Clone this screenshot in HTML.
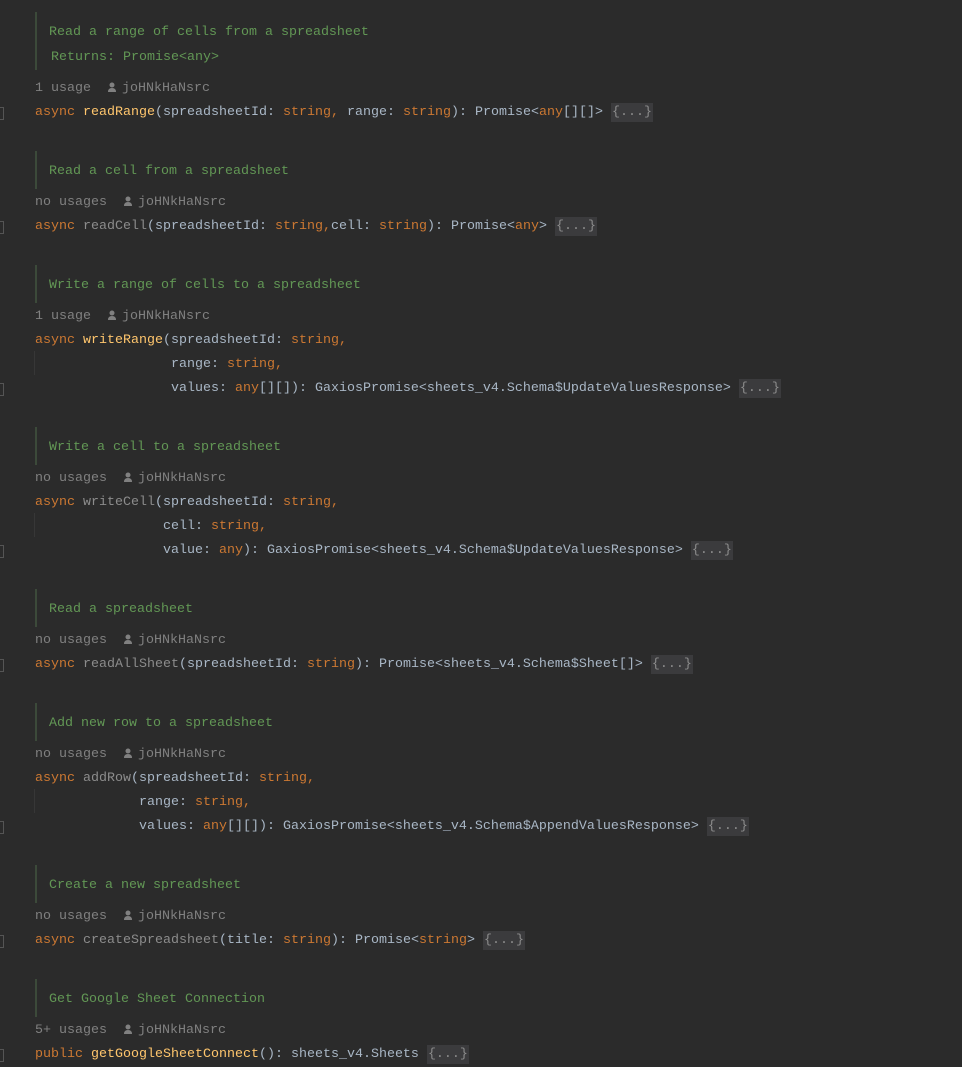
<!DOCTYPE html>
<html><head><meta charset="utf-8"><style>
html,body{margin:0;padding:0;background:#2b2b2b;width:962px;height:1067px;overflow:hidden}
.l{position:absolute;left:35px;height:20px;line-height:20px;margin-top:2px;font-family:"Liberation Mono",monospace;font-size:13.33px;white-space:pre;color:#a9b7c6}
.d{color:#629755;left:49px}
.u{color:#808080}
.k{color:#cc7832}
.f{color:#ffc66d}
.g{color:#8c8c8c}
.fold{background:#3b3b3d;color:#8c8c8c;padding:2px 1px}
.bar{position:absolute;left:35px;width:2px;background:#3c4a3a}
.ig{position:absolute;left:34px;width:1px;background:#373737}
.gm{position:absolute;left:0;width:3px;height:11px;border:1px solid #555;border-left:none;margin-top:2px}
.ic{display:inline-block;width:10px;height:10px;vertical-align:-1px;margin-right:5px}
</style></head><body>
<svg width="0" height="0" style="position:absolute"><defs><g id="p"><circle cx="5" cy="3" r="2.5" fill="#808080"/><path d="M1 10 Q1 6 5 6 Q9 6 9 10Z" fill="#808080"/></g></defs></svg>

<div class="bar" style="top:12px;height:58px"></div>
<div class="l d" style="top:21px">Read a range of cells from a spreadsheet</div>
<div class="l d" style="top:46px;left:51px">Returns: Promise&lt;any&gt;</div>
<div class="l u" style="top:77px">1 usage  <svg class="ic"><use href="#p"/></svg>joHNkHaNsrc</div>
<div class="gm" style="top:105px"></div>
<div class="l" style="top:101px"><span class="k">async </span><span class="f">readRange</span>(spreadsheetId: <span class="k">string, </span>range: <span class="k">string</span>): Promise&lt;<span class="k">any</span>[][]&gt; <span class="fold">{...}</span></div>

<div class="bar" style="top:151px;height:38px"></div>
<div class="l d" style="top:160px">Read a cell from a spreadsheet</div>
<div class="l u" style="top:191px">no usages  <svg class="ic"><use href="#p"/></svg>joHNkHaNsrc</div>
<div class="gm" style="top:219px"></div>
<div class="l" style="top:215px"><span class="k">async </span><span class="g">readCell</span>(spreadsheetId: <span class="k">string,</span>cell: <span class="k">string</span>): Promise&lt;<span class="k">any</span>&gt; <span class="fold">{...}</span></div>

<div class="bar" style="top:265px;height:38px"></div>
<div class="l d" style="top:274px">Write a range of cells to a spreadsheet</div>
<div class="l u" style="top:305px">1 usage  <svg class="ic"><use href="#p"/></svg>joHNkHaNsrc</div>
<div class="ig" style="top:351px;height:24px"></div>
<div class="gm" style="top:381px"></div>
<div class="l" style="top:329px"><span class="k">async </span><span class="f">writeRange</span>(spreadsheetId: <span class="k">string,</span></div>
<div class="l" style="top:353px">                 range: <span class="k">string,</span></div>
<div class="l" style="top:377px">                 values: <span class="k">any</span>[][]): GaxiosPromise&lt;sheets_v4.Schema$UpdateValuesResponse&gt; <span class="fold">{...}</span></div>

<div class="bar" style="top:427px;height:38px"></div>
<div class="l d" style="top:436px">Write a cell to a spreadsheet</div>
<div class="l u" style="top:467px">no usages  <svg class="ic"><use href="#p"/></svg>joHNkHaNsrc</div>
<div class="ig" style="top:513px;height:24px"></div>
<div class="gm" style="top:543px"></div>
<div class="l" style="top:491px"><span class="k">async </span><span class="g">writeCell</span>(spreadsheetId: <span class="k">string,</span></div>
<div class="l" style="top:515px">                cell: <span class="k">string,</span></div>
<div class="l" style="top:539px">                value: <span class="k">any</span>): GaxiosPromise&lt;sheets_v4.Schema$UpdateValuesResponse&gt; <span class="fold">{...}</span></div>

<div class="bar" style="top:589px;height:38px"></div>
<div class="l d" style="top:598px">Read a spreadsheet</div>
<div class="l u" style="top:629px">no usages  <svg class="ic"><use href="#p"/></svg>joHNkHaNsrc</div>
<div class="gm" style="top:657px"></div>
<div class="l" style="top:653px"><span class="k">async </span><span class="g">readAllSheet</span>(spreadsheetId: <span class="k">string</span>): Promise&lt;sheets_v4.Schema$Sheet[]&gt; <span class="fold">{...}</span></div>

<div class="bar" style="top:703px;height:38px"></div>
<div class="l d" style="top:712px">Add new row to a spreadsheet</div>
<div class="l u" style="top:743px">no usages  <svg class="ic"><use href="#p"/></svg>joHNkHaNsrc</div>
<div class="ig" style="top:789px;height:24px"></div>
<div class="gm" style="top:819px"></div>
<div class="l" style="top:767px"><span class="k">async </span><span class="g">addRow</span>(spreadsheetId: <span class="k">string,</span></div>
<div class="l" style="top:791px">             range: <span class="k">string,</span></div>
<div class="l" style="top:815px">             values: <span class="k">any</span>[][]): GaxiosPromise&lt;sheets_v4.Schema$AppendValuesResponse&gt; <span class="fold">{...}</span></div>

<div class="bar" style="top:865px;height:38px"></div>
<div class="l d" style="top:874px">Create a new spreadsheet</div>
<div class="l u" style="top:905px">no usages  <svg class="ic"><use href="#p"/></svg>joHNkHaNsrc</div>
<div class="gm" style="top:933px"></div>
<div class="l" style="top:929px"><span class="k">async </span><span class="g">createSpreadsheet</span>(title: <span class="k">string</span>): Promise&lt;<span class="k">string</span>&gt; <span class="fold">{...}</span></div>

<div class="bar" style="top:979px;height:38px"></div>
<div class="l d" style="top:988px">Get Google Sheet Connection</div>
<div class="l u" style="top:1019px">5+ usages  <svg class="ic"><use href="#p"/></svg>joHNkHaNsrc</div>
<div class="gm" style="top:1047px"></div>
<div class="l" style="top:1043px"><span class="k">public </span><span class="f">getGoogleSheetConnect</span>(): sheets_v4.Sheets <span class="fold">{...}</span></div>
</body></html>
